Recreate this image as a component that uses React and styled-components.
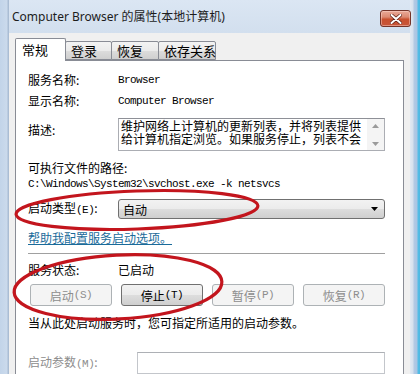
import React from 'react';
import styled, { createGlobalStyle } from 'styled-components';

const GlobalStyle = createGlobalStyle`
  html, body {
    margin: 0;
    padding: 0;
    overflow: hidden;
  }
  body {
    font-family: "Noto Sans CJK SC", "Noto Sans", sans-serif;
    font-size: 12px;
    color: #000;
  }
`;

const Frame = styled.div`
  position: relative;
  width: 420px;
  height: 374px;
  box-sizing: border-box;
  padding: 0 10px 0 9px;
  display: flex;
  flex-direction: column;
  overflow: hidden;
  background:
    linear-gradient(to right,
      #c2d4e9 0, #cbdaec 7px, #aabdd4 8px, #aabdd4 9px,
      transparent 9px, transparent 410px,
      #e2e9f2 410px, #d6e1ee 413px, #b3cae4 414px, #a9c4e3 417px, #53bde6 418px, #4db7e2 420px),
    linear-gradient(to bottom, #dbe6f3 0, #d2dfee 33px, #d2dfee 100%);
`;

const TitleBar = styled.div`
  height: 33px;
  flex: none;
  display: flex;
  align-items: flex-start;
`;

const Title = styled.div`
  margin: 8px 0 0 3px;
  font-family: "Noto Sans", "Noto Sans CJK SC", sans-serif;
  font-size: 12px;
  line-height: 18px;
  color: #1c1c1c;
  white-space: nowrap;
`;

const CloseButton = styled.div`
  margin: 10px -1px 0 auto;
  width: 31px;
  height: 17px;
  box-sizing: border-box;
  border: 1px solid #74342a;
  border-radius: 3px;
  display: flex;
  align-items: center;
  justify-content: center;
  background: linear-gradient(to bottom, #e9a998 0, #dc8a73 40%, #c8502f 55%, #c8563a 100%);
  box-shadow: inset 0 0 0 1px rgba(255, 220, 210, 0.45);
`;

const Client = styled.div`
  flex: 1;
  min-height: 0;
  display: flex;
  flex-direction: column;
  background: #f0f0f0;
  padding: 3px 6px 0 6px;
`;

const TabStrip = styled.div`
  height: 24px;
  flex: none;
  display: flex;
  align-items: flex-end;
  position: relative;
  z-index: 1;
`;

const Tab = styled.div`
  width: ${p => p.$w}px;
  height: ${p => (p.$active ? 23 : 19)}px;
  box-sizing: border-box;
  margin-left: ${p => (p.$first ? 0 : -1)}px;
  margin-bottom: ${p => (p.$active ? -1 : 0)}px;
  padding: ${p => (p.$active ? '2px 0 0 6px' : '0 0 0 5px')};
  border: 1px solid #898c95;
  border-bottom: ${p => (p.$active ? 'none' : '1px solid #898c95')};
  border-radius: 2px 2px 0 0;
  background: ${p => (p.$active
    ? '#fff'
    : 'linear-gradient(to bottom, #f3f3f3 0, #ebebeb 50%, #dddddd 51%, #cfcfcf 100%)')};
  font-size: 13px;
  line-height: 18px;
  white-space: nowrap;
  position: relative;
  z-index: ${p => (p.$active ? 2 : 1)};
`;

const Panel = styled.div`
  flex: 1;
  min-height: 0;
  background: #fff;
  border: 1px solid #898c95;
  border-bottom: none;
  padding: 9px 18px 0 12px;
  display: flex;
  flex-direction: column;
`;

const FieldRow = styled.div`
  display: grid;
  grid-template-columns: ${p => p.$label || 90}px 1fr;
  align-items: ${p => p.$align || 'center'};
  height: ${p => p.$h || 22}px;
  margin-top: ${p => p.$mt || 0}px;
`;

const Label = styled.div`
  font-size: 12px;
  line-height: 16px;
  color: ${p => (p.$disabled ? '#8d8d8d' : '#000')};
  padding-top: ${p => p.$pt || 0}px;
  white-space: nowrap;
`;

const Mono = styled.div`
  font-family: "Liberation Mono", "DejaVu Sans Mono", monospace;
  font-size: 11px;
  letter-spacing: -0.6px;
  line-height: 16px;
  white-space: nowrap;
`;

const Line = styled.div`
  margin-top: ${p => p.$mt || 0}px;
  line-height: 16px;
  white-space: nowrap;
`;

const DescBox = styled.div`
  height: 33px;
  box-sizing: border-box;
  border: 1px solid #abadb3;
  border-top-color: #8e9097;
  background: #fff;
  display: flex;
  justify-content: space-between;
`;

const DescText = styled.div`
  width: 242px;
  padding: 0 0 0 2px;
  font-size: 12px;
  line-height: 13px;
  word-break: break-all;
`;

const ScrollBar = styled.div`
  width: 17px;
  display: flex;
  flex-direction: column;
  justify-content: space-between;
  align-items: center;
  padding: 5px 0 4px;
  background: #f4f4f4;
`;

const Select = styled.div`
  height: 20px;
  box-sizing: border-box;
  border: 1px solid #707070;
  border-radius: 3px;
  display: flex;
  align-items: center;
  padding: 0 6px 0 4px;
  background: linear-gradient(to bottom, #f2f2f2 0, #ebebeb 50%, #dddddd 51%, #cfcfcf 100%);
  font-size: 12px;
`;

const SelectValue = styled.span`
  flex: 1;
`;

const HelpLink = styled.a`
  display: block;
  margin-top: 11px;
  line-height: 16px;
  color: #1a6b9a;
  text-decoration: underline;
  white-space: nowrap;
`;

const Separator = styled.div`
  margin-top: 7px;
  height: 1px;
  background: #a0a0a0;
`;

const ButtonRow = styled.div`
  margin: 6px 0 0 2px;
  display: grid;
  grid-template-columns: repeat(4, 82px);
  column-gap: 9px;
`;

const Button = styled.div`
  height: 22px;
  box-sizing: border-box;
  border: 1px solid ${p => (p.$disabled ? '#adb2b5' : '#707070')};
  border-radius: 3px;
  display: flex;
  align-items: center;
  justify-content: center;
  background: ${p => (p.$disabled
    ? '#f4f4f4'
    : 'linear-gradient(to bottom, #f2f2f2 0, #ebebeb 50%, #dddddd 51%, #cfcfcf 100%)')};
  color: ${p => (p.$disabled ? '#8d8d8d' : '#000')};
  font-size: 12px;
  white-space: nowrap;
`;

const Mnemonic = styled.span`
  font-family: "Liberation Mono", "DejaVu Sans Mono", monospace;
  font-size: 11px;
  letter-spacing: -0.5px;
`;

const TextInput = styled.div`
  height: 22px;
  box-sizing: border-box;
  border: 1px solid #c3c6cb;
  border-top-color: #adb0b5;
  background: #fff;
`;

const Marks = styled.svg`
  position: absolute;
  left: 0;
  top: 0;
  pointer-events: none;
`;

function Arrow({ up, color = '#9a9a9a' }) {
  return (
    <svg width="7" height="4" viewBox="0 0 7 4">
      <path d={up ? 'M0 4 L3.5 0 L7 4 Z' : 'M0 0 L3.5 4 L7 0 Z'} fill={color} />
    </svg>
  );
}

const tabs = [
  { name: '常规', w: 51 },
  { name: '登录', w: 47 },
  { name: '恢复', w: 48 },
  { name: '依存关系', w: 58 },
];

const buttons = [
  { text: '启动', key: 'S', disabled: true },
  { text: '停止', key: 'T', disabled: false },
  { text: '暂停', key: 'P', disabled: true },
  { text: '恢复', key: 'R', disabled: true },
];

export default function App() {
  return (
    <>
      <GlobalStyle />
      <Frame>
        <TitleBar>
          <Title>Computer Browser 的属性(本地计算机)</Title>
          <CloseButton>
            <svg width="12" height="10" viewBox="0 0 12 10">
              <path d="M1.5 1 L10.5 9 M10.5 1 L1.5 9" stroke="#5a1d14" strokeWidth="3.4" strokeLinecap="round" />
              <path d="M1.5 1 L10.5 9 M10.5 1 L1.5 9" stroke="#fff" strokeWidth="2" strokeLinecap="round" />
            </svg>
          </CloseButton>
        </TitleBar>
        <Client>
          <TabStrip>
            {tabs.map((t, i) => (
              <Tab key={t.name} $w={t.w} $active={i === 0} $first={i === 0}>{t.name}</Tab>
            ))}
          </TabStrip>
          <Panel>
            <FieldRow>
              <Label>服务名称:</Label>
              <Mono>Browser</Mono>
            </FieldRow>
            <FieldRow>
              <Label>显示名称:</Label>
              <Mono>Computer Browser</Mono>
            </FieldRow>
            <FieldRow $mt={7} $h={33} $align="start">
              <Label $pt={4}>描述:</Label>
              <DescBox>
                <DescText>维护网络上计算机的更新列表，并将列表提供给计算机指定浏览。如果服务停止，列表不会</DescText>
                <ScrollBar>
                  <Arrow up />
                  <Arrow />
                </ScrollBar>
              </DescBox>
            </FieldRow>
            <Line $mt={9}>可执行文件的路径:</Line>
            <Mono>C:\Windows\System32\svchost.exe -k netsvcs</Mono>
            <FieldRow $mt={7} $h={20}>
              <Label>启动类型<Mnemonic>(E)</Mnemonic>:</Label>
              <Select>
                <SelectValue>自动</SelectValue>
                <Arrow color="#000" />
              </Select>
            </FieldRow>
            <HelpLink>帮助我配置服务启动选项。</HelpLink>
            <Separator />
            <FieldRow $mt={8} $h={16}>
              <Label>服务状态:</Label>
              <Label>已启动</Label>
            </FieldRow>
            <ButtonRow>
              {buttons.map(b => (
                <Button key={b.key} $disabled={b.disabled}>
                  {b.text}<Mnemonic>({b.key})</Mnemonic>
                </Button>
              ))}
            </ButtonRow>
            <Line $mt={9}>当从此处启动服务时，您可指定所适用的启动参数。</Line>
            <FieldRow $mt={21} $label={109}>
              <Label $disabled>启动参数<Mnemonic>(M)</Mnemonic>:</Label>
              <TextInput />
            </FieldRow>
          </Panel>
        </Client>
        <Marks width="420" height="374" viewBox="0 0 420 374">
          <ellipse cx="137" cy="210" rx="121" ry="19" transform="rotate(-2 137 210)"
            fill="none" stroke="#c3151d" strokeWidth="3.2" />
          <ellipse cx="118" cy="287" rx="104" ry="32" transform="rotate(-3 118 287)"
            fill="none" stroke="#c3151d" strokeWidth="3.2" />
        </Marks>
      </Frame>
    </>
  );
}
